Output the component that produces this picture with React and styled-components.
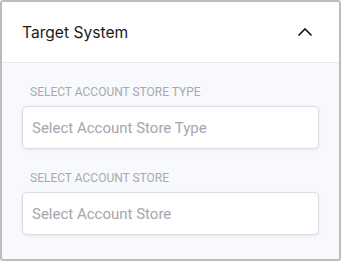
import React from 'react'
import styled, { createGlobalStyle } from 'styled-components'

const Global = createGlobalStyle`
  html, body { margin: 0; padding: 0; background: #fff; }
  * { box-sizing: border-box; }
`

const Panel = styled.div`
  width: 341px;
  height: 261px;
  border: 2px solid #bcbcbc;
  border-radius: 3px;
  background: #f8f9fc;
  display: flex;
  flex-direction: column;
  overflow: hidden;
`

const Header = styled.div`
  height: 61px;
  flex-shrink: 0;
  background: #fff;
  border-bottom: 1px solid #e9e9ee;
  display: flex;
  align-items: center;
  justify-content: space-between;
  padding: 0 26px 0 20px;
`

const Title = styled.div`
  font-family: Inter, 'Noto Sans', sans-serif;
  font-size: 15.6px;
  color: #1a1a1a;
`

const Body = styled.div`
  display: flex;
  flex-direction: column;
  gap: 22px;
  padding: 22px 20px 0 20px;
`

const Field = styled.div`
  display: flex;
  flex-direction: column;
  gap: 7px;
`

const Label = styled.div`
  font-family: Roboto, 'Liberation Sans', sans-serif;
  font-size: 12px;
  line-height: 14px;
  color: #a9a9ad;
  text-transform: uppercase;
  padding-left: 8px;
`

const Input = styled.div`
  height: 43px;
  background: #fff;
  border: 1px solid #dcdde2;
  border-radius: 5px;
  box-shadow: 0 1px 3px rgba(120, 130, 160, 0.15);
  display: flex;
  align-items: center;
  padding-left: 9px;
  font-family: Roboto, 'Liberation Sans', sans-serif;
  font-size: 15px;
  color: #a6a6aa;
`

const Chevron = () => (
  <svg width="16" height="10" viewBox="0 0 16 10">
    <path d="M1.5 8.5 L8 2 L14.5 8.5" fill="none" stroke="#1a1a1a" strokeWidth="1.7" />
  </svg>
)

export default function App() {
  return (
    <>
      <Global />
      <Panel>
        <Header>
          <Title>Target System</Title>
          <Chevron />
        </Header>
        <Body>
          <Field>
            <Label>Select Account Store Type</Label>
            <Input>Select Account Store Type</Input>
          </Field>
          <Field>
            <Label>Select Account Store</Label>
            <Input>Select Account Store</Input>
          </Field>
        </Body>
      </Panel>
    </>
  )
}
